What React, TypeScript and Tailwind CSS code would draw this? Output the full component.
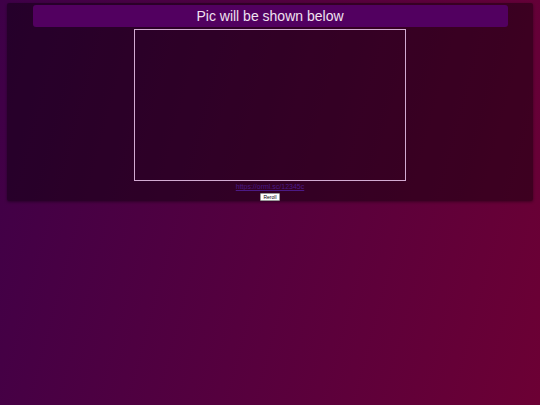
export default function App() {
  return (
    <div className="h-[405px] w-full bg-[linear-gradient(105deg,#3e0048,#6c0034)] pt-[3px] font-['Liberation_Sans',Arial,sans-serif]">
      <div className="mx-[7px] flex h-[198px] flex-col items-center rounded-[2px] bg-black/40 pt-[2px] shadow-[0_1px_3px_rgba(0,0,0,0.4)]">
        <div className="flex h-[22px] w-[475px] items-center justify-center rounded-[3px] bg-[#520060] pt-[1px] text-[14px] text-[#f0e2f0]">
          Pic will be shown below
        </div>
        <div className="mt-[2px] h-[154px] w-[272px] border border-[#d2aad2]" />
        <a href="#" className="mt-[1px] text-[7px] leading-[10px] text-[#4c1a86] underline">
          https://orml.sc/12345c
        </a>
        <button className="mt-[1px] h-[8px] rounded-[1px] border border-[#999] bg-white px-[2px] text-[5px] leading-[6px] text-black">
          Reroll
        </button>
      </div>
    </div>
  );
}
